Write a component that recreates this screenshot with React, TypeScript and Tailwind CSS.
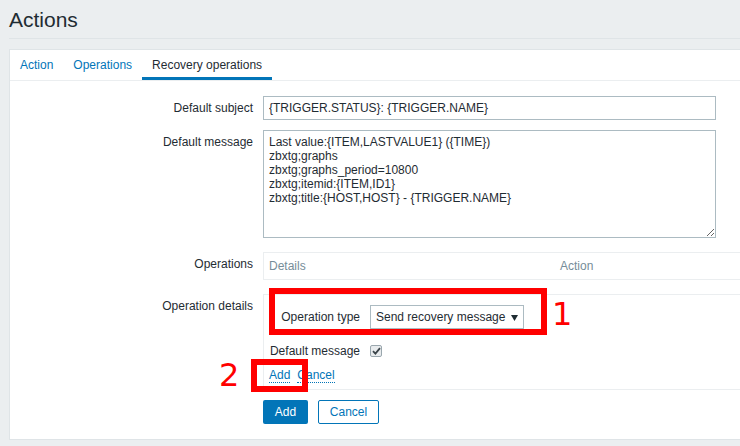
// Actions form, "Recovery operations" tab, with two red callouts drawn over it.

const FONT = { fontFamily: '"Liberation Sans", Arial, sans-serif' };

const MESSAGE = [
  'Last value:{ITEM,LASTVALUE1} ({TIME})',
  'zbxtg;graphs',
  'zbxtg;graphs_period=10800',
  'zbxtg;itemid:{ITEM,ID1}',
  'zbxtg;title:{HOST,HOST} - {TRIGGER.NAME}',
].join('\n');

const TABS = [
  { label: 'Action', active: false },
  { label: 'Operations', active: false },
  { label: 'Recovery operations', active: true },
];

function FormLabel({ children }: { children: string }) {
  return <div className="pt-[5px] text-right text-[12px] leading-[14px] text-[#1f2c33]">{children}</div>;
}

function Checkbox() {
  return (
    <span className="flex h-[12px] w-[12px] items-center justify-center rounded-[2px] border border-[#9aa7ae] bg-[#e8ebed]">
      <svg width="9" height="8" viewBox="0 0 9 8">
        <path d="M1 4.2 L3.4 6.6 L8 1.2" fill="none" stroke="#3a4449" strokeWidth="1.8" />
      </svg>
    </span>
  );
}

export default function App() {
  return (
    <div className="relative h-[446px] w-[740px] overflow-hidden bg-[#ebeef0] pl-[9px]" style={FONT}>
      <div className="border-b border-[#dfe4e7] pb-[6px] pt-[8px]">
        <h1 className="text-[21px] leading-[24px] text-[#1f2c33]">Actions</h1>
      </div>

      <div className="mt-[10px] w-[780px] border border-[#dfe4e7] bg-white pb-[15px]">
        <div className="flex h-[31px] border-b border-[#ebeef0]">
          {TABS.map((t) => (
            <div
              key={t.label}
              className={
                t.active
                  ? 'flex items-center border-b-[3px] border-[#0275b8] px-[10px] pt-[3px] text-[12px] text-[#1f2c33]'
                  : 'flex items-center border-b-[3px] border-transparent px-[10px] pt-[3px] text-[12px] text-[#0275b8]'
              }
            >
              {t.label}
            </div>
          ))}
        </div>

        <div className="grid grid-cols-[243px_1fr] items-start gap-x-[10px] pt-[15px]">
          <FormLabel>Default subject</FormLabel>
          <input
            readOnly
            defaultValue="{TRIGGER.STATUS}: {TRIGGER.NAME}"
            className="h-[24px] w-[453px] border border-[#acbbc2] px-[5px] text-[12px] text-[#1f2c33] outline-none"
          />

          <div className="col-span-2 h-[10px]" />
          <FormLabel>Default message</FormLabel>
          <textarea
            readOnly
            defaultValue={MESSAGE}
            className="block h-[108px] w-[453px] border border-[#acbbc2] px-[5px] py-[4px] text-[12px] leading-[14px] text-[#1f2c33] outline-none"
          />

          <div className="col-span-2 h-[14px]" />
          <FormLabel>Operations</FormLabel>
          <div className="flex h-[28px] w-[600px] items-center border border-[#ebeef0] text-[12px] text-[#768d99]">
            <div className="w-[292px] pl-[5px]">Details</div>
            <div className="pl-[4px]">Action</div>
          </div>

          <div className="col-span-2 h-[14px]" />
          <FormLabel>Operation details</FormLabel>
          <div className="w-[600px] border-y border-l border-[#ebeef0] pb-[6px] pl-[5px] pt-[10px] text-[12px] text-[#1f2c33]">
            <div className="grid grid-cols-[91px_1fr] items-center gap-x-[10px]">
              <div className="text-right">Operation type</div>
              <div className="relative flex h-[24px] w-[154px] items-center border border-[#acbbc2] pl-[5px]">
                Send recovery message
                <svg className="absolute right-[5px] top-[9px]" width="7" height="6" viewBox="0 0 7 6">
                  <path d="M0 0 H7 L3.5 6 Z" fill="#1f2c33" />
                </svg>
              </div>
              <div className="mt-[14px] flex h-[16px] items-center justify-end">Default message</div>
              <div className="mt-[14px] flex h-[16px] items-center">
                <Checkbox />
              </div>
            </div>
            <div className="mt-[9px] flex gap-[7px] leading-[14px] text-[#0275b8]">
              <span className="border-b border-dotted border-[#0275b8]">Add</span>
              <span className="border-b border-dotted border-[#0275b8]">Cancel</span>
            </div>
          </div>

          <div className="col-span-2 h-[10px]" />
          <div />
          <div className="flex gap-[10px]">
            <button className="h-[24px] w-[45px] rounded-[2px] bg-[#0275b8] text-[12px] text-white">Add</button>
            <button className="h-[24px] w-[61px] rounded-[2px] border border-[#0275b8] bg-white text-[12px] text-[#0275b8]">
              Cancel
            </button>
          </div>
        </div>
      </div>

      {/* red callouts laid over the form */}
      <div className="absolute left-[269px] top-[288px] h-[47px] w-[278px] border-[6px] border-[#ff0000]" />
      <div
        className="absolute left-[552px] top-[298px] text-[32px] leading-[32px] text-[#ff0000]"
        style={{ fontFamily: '"DejaVu Sans", sans-serif' }}
      >
        1
      </div>
      <div className="absolute left-[251px] top-[359px] h-[33px] w-[57px] border-[6px] border-[#ff0000]" />
      <div
        className="absolute left-[219px] top-[359px] text-[32px] leading-[32px] text-[#ff0000]"
        style={{ fontFamily: '"DejaVu Sans", sans-serif' }}
      >
        2
      </div>
    </div>
  );
}
